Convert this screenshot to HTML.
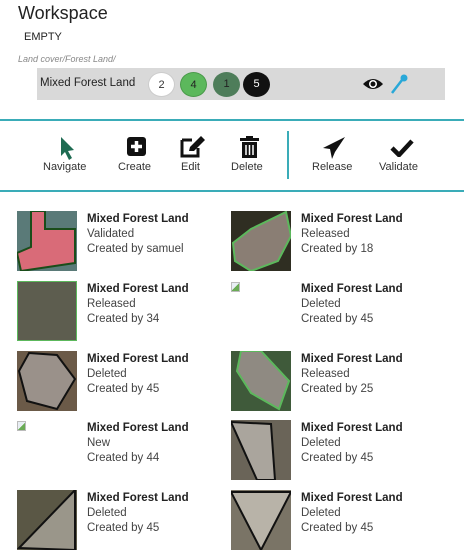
<!DOCTYPE html><html><head><style>
body{margin:0;width:464px;height:557px;background:#fff;font-family:"Liberation Sans",sans-serif;color:#333;position:relative;overflow:hidden}
.a{position:absolute}
.t{font-size:11.5px;line-height:15px;color:#444}
.t b{color:#222;font-weight:bold}
.c{position:absolute;top:72px;width:27px;height:25px;border-radius:50%;font-size:11px;text-align:center;line-height:25px;box-sizing:border-box}
.tb{position:absolute;top:161px;font-size:11px;color:#333;text-align:center}
.th{position:absolute;width:60px;height:60px;overflow:hidden}
</style></head><body>
<div class="a" style="left:18px;top:3px;font-size:18px;color:#222">Workspace</div>
<div class="a" style="left:24px;top:31px;font-size:11px;color:#222">EMPTY</div>
<div class="a" style="left:18px;top:54px;font-size:9px;font-style:italic;color:#888">Land cover/Forest Land/</div>
<div class="a" style="left:37px;top:68px;width:408px;height:32px;background:#d9d9d9"></div>
<div class="a" style="left:40px;top:77px;font-size:11.5px;color:#222">Mixed Forest Land</div>
<div class="c" style="left:148px;background:#fff;border:1px solid #ccc;color:#333">2</div>
<div class="c" style="left:180px;background:#5cb85c;border:1px solid #4a9a4a;color:#222">4</div>
<div class="c" style="left:213px;background:#4e7d5a;color:#222">1</div>
<div class="c" style="left:243px;background:#111;color:#fff">5</div>
<svg class="a" style="left:362px;top:77px" width="22" height="14" viewBox="0 0 22 14"><path d="M1 7Q11 -3 21 7Q11 17 1 7Z" fill="#111"/><circle cx="11" cy="7" r="4" fill="#fff"/><circle cx="11" cy="7" r="2.5" fill="#111"/></svg>
<svg class="a" style="left:389px;top:73px" width="20" height="22" viewBox="0 0 20 22"><path d="M3 20L13 7" stroke="#29a8d8" stroke-width="2.5"/><circle cx="15" cy="5" r="3.5" fill="#29a8d8"/></svg>
<div class="a" style="left:0;top:119px;width:464px;height:2px;background:#3aacb8"></div>
<div class="a" style="left:0;top:190px;width:464px;height:2px;background:#3aacb8"></div>
<div class="a" style="left:287px;top:131px;width:2px;height:48px;background:#3aacb8"></div>
<svg class="a" style="left:60px;top:136px" width="16" height="24" viewBox="0 0 16 24"><path d="M1 1L1 20L5 16L9 24L12 22L8 15L14 14Z" fill="#1e6b52"/></svg>
<svg class="a" style="left:127px;top:137px" width="19" height="19" viewBox="0 0 19 19"><rect width="19" height="19" rx="3" fill="#111"/><path d="M9.5 4V15M4 9.5H15" stroke="#fff" stroke-width="3.5"/></svg>
<svg class="a" style="left:180px;top:136px" width="26" height="22" viewBox="0 0 26 22"><path d="M2 4H12M2 4V20H18V12" stroke="#111" stroke-width="3" fill="none"/><path d="M9 15L10 11L21 0L25 4L14 15Z" fill="#111"/></svg>
<svg class="a" style="left:240px;top:136px" width="19" height="22" viewBox="0 0 19 22"><rect x="0" y="2" width="19" height="3" fill="#111"/><rect x="6" y="0" width="7" height="3" fill="#111"/><path d="M2 6H17V22H2Z" fill="#111"/><path d="M6 9V19M9.5 9V19M13 9V19" stroke="#fff" stroke-width="1.5"/></svg>
<svg class="a" style="left:322px;top:136px" width="24" height="24" viewBox="0 0 24 24"><path d="M23 1L1 12L8 13L10 23L13 16Z" fill="#111"/></svg>
<svg class="a" style="left:390px;top:139px" width="24" height="18" viewBox="0 0 24 18"><path d="M2 9L9 16L22 2" stroke="#111" stroke-width="4.5" fill="none"/></svg>
<div class="tb" style="left:43px">Navigate</div>
<div class="tb" style="left:118px">Create</div>
<div class="tb" style="left:181px">Edit</div>
<div class="tb" style="left:231px">Delete</div>
<div class="tb" style="left:312px">Release</div>
<div class="tb" style="left:379px">Validate</div>

<div class="th" style="left:17px;top:211px;background:#5a7a78"><svg width="60" height="60"><path d="M14 0H28V18H58V52L4 60L0 42L14 36Z" fill="#d96b78" stroke="#1a4d1a" stroke-width="2"/></svg></div>
<div class="th" style="left:231px;top:211px;background:#2f2e22"><svg width="60" height="60"><path d="M55 1L60 25L47 50L20 60L4 50L2 32L20 18Z" fill="#8a7e74" stroke="#5cb85c" stroke-width="2"/></svg></div>
<div class="th" style="left:17px;top:281px;background:#5d5d4f;border:1px solid #5cb85c;box-sizing:border-box"></div>
<div class="th" style="left:17px;top:351px;background:#6b5a48"><svg width="60" height="60"><path d="M12 2L40 4L58 28L40 58L10 50L2 20Z" fill="#9a918a" stroke="#111" stroke-width="2"/></svg></div>
<div class="th" style="left:231px;top:351px;background:#3f5a3a"><svg width="60" height="60"><path d="M10 0L30 0L58 30L48 58L20 42L6 20Z" fill="#8f8a82" stroke="#5cb85c" stroke-width="2"/></svg></div>
<div class="th" style="left:231px;top:420px;background:#6a6458"><svg width="60" height="60"><path d="M0 2L40 4L44 60L26 60Z" fill="#aaa59d" stroke="#111" stroke-width="2"/></svg></div>
<div class="th" style="left:17px;top:490px;background:#5a5745"><svg width="60" height="60"><path d="M58 0L58 60L2 58Z" fill="#9a968a" stroke="#111" stroke-width="2"/></svg></div>
<div class="th" style="left:231px;top:490px;background:#7a7466"><svg width="60" height="60"><path d="M0 2L60 2L30 60Z" fill="#b8b3a8" stroke="#111" stroke-width="2"/></svg></div>
<div class="a" style="left:231px;top:282px;width:9px;height:10px;border:1px solid #bbb;box-sizing:border-box;background:linear-gradient(135deg,#e8eef4 50%,#6aab55 50%)"></div>
<div class="a" style="left:17px;top:421px;width:9px;height:10px;border:1px solid #bbb;box-sizing:border-box;background:linear-gradient(135deg,#e8eef4 50%,#6aab55 50%)"></div>

<div class="a t" style="left:87px;top:212px"><b>Mixed Forest Land</b><br>Validated<br>Created by samuel</div>
<div class="a t" style="left:301px;top:212px"><b>Mixed Forest Land</b><br>Released<br>Created by 18</div>
<div class="a t" style="left:87px;top:282px"><b>Mixed Forest Land</b><br>Released<br>Created by 34</div>
<div class="a t" style="left:301px;top:282px"><b>Mixed Forest Land</b><br>Deleted<br>Created by 45</div>
<div class="a t" style="left:87px;top:352px"><b>Mixed Forest Land</b><br>Deleted<br>Created by 45</div>
<div class="a t" style="left:301px;top:352px"><b>Mixed Forest Land</b><br>Released<br>Created by 25</div>
<div class="a t" style="left:87px;top:421px"><b>Mixed Forest Land</b><br>New<br>Created by 44</div>
<div class="a t" style="left:301px;top:421px"><b>Mixed Forest Land</b><br>Deleted<br>Created by 45</div>
<div class="a t" style="left:87px;top:491px"><b>Mixed Forest Land</b><br>Deleted<br>Created by 45</div>
<div class="a t" style="left:301px;top:491px"><b>Mixed Forest Land</b><br>Deleted<br>Created by 45</div>
</body></html>
